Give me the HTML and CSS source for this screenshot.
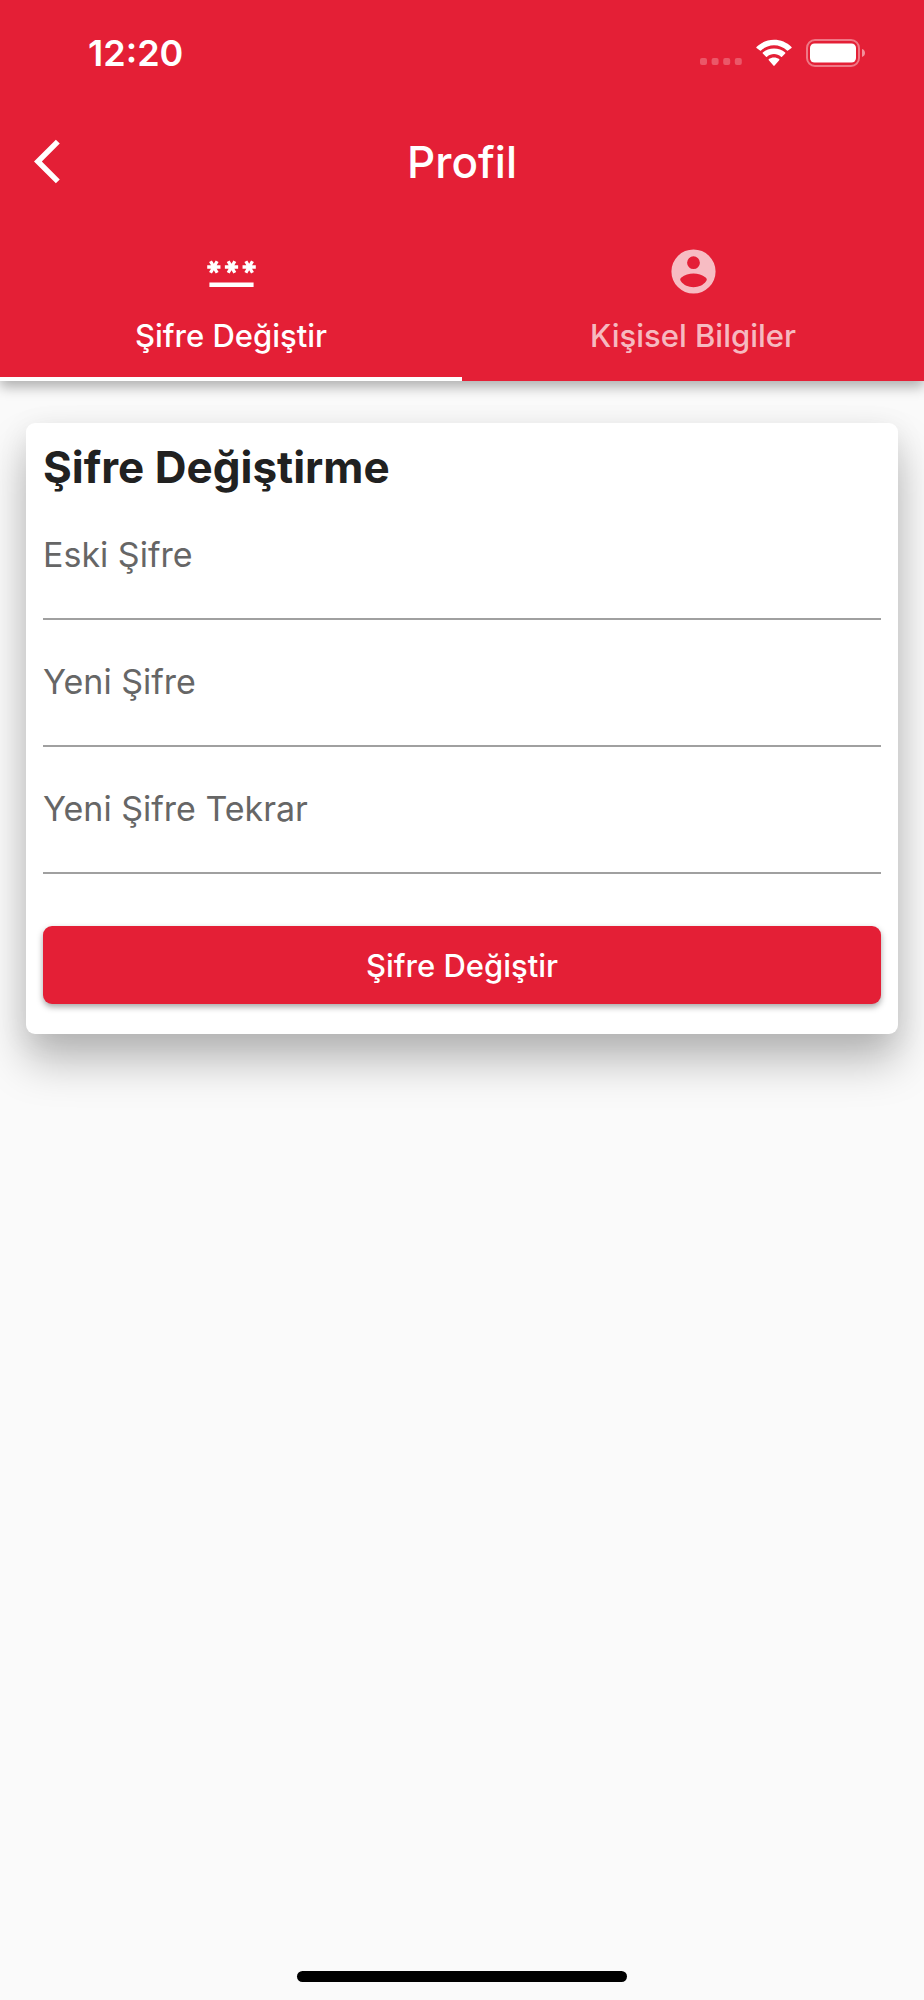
FILE: index.html
```html
<!DOCTYPE html>
<html lang="tr">
<head>
    <meta charset="UTF-8">
    <meta name="viewport" content="width=device-width, initial-scale=1.0">
    <title>Profil</title>
    <link rel="stylesheet" href="styles.css">
</head>
<body>
    <header class="header">
        <div class="status-bar">
            <span class="time">12:20</span>
            <div class="status-icons">
                <svg class="signal" width="42" height="28" viewBox="0 0 42 28" fill="#fff" fill-opacity="0.25">
                    <rect x="0" y="19" width="7" height="7" rx="2"/>
                    <rect x="11.6" y="19" width="7" height="7" rx="2"/>
                    <rect x="23.2" y="19" width="7" height="7" rx="2"/>
                    <rect x="34.8" y="19" width="7" height="7" rx="2"/>
                </svg>
                <svg class="wifi" width="36" height="28" viewBox="0 0 36 28" fill="#fff">
                    <path d="M18 6.3c4.900 0 9.500 1.900 13 5.300.3.3.7.3 1 0l3.500-2.600c.3-.3.3-.8 0-1.100C30.800 3.400 24.600.8 18 .8S5.200 3.400.5 7.900c-.3.3-.3.8 0 1.100L4 11.600c.3.3.7.3 1 0C8.500 8.200 13.100 6.300 18 6.300z"/>
                    <path d="M18 15c2.600 0 5.100 1 7 2.700.3.3.7.3 1 0l3.200-3.200c.3-.3.3-.7 0-1C26.200 10.800 22.200 9.400 18 9.400s-8.200 1.400-11.200 4.100c-.3.3-.3.7 0 1L10 17.700c.3.3.7.3 1 0C12.900 16 15.400 15 18 15z"/>
                    <path d="M23.200 21.200c.3-.3.3-.8 0-1.100C21.700 19 19.900 18.400 18 18.400s-3.700.6-5.200 1.700c-.3.300-.3.800 0 1.100l4.600 5.400c.3.400.9.400 1.200 0z"/>
                </svg>
                <svg class="battery" width="60" height="28" viewBox="0 0 60 28">
                    <rect x="1" y="1" width="52" height="26" rx="8" fill="none" stroke="#fff" stroke-opacity="0.4" stroke-width="2"/>
                    <rect x="4" y="4.500" width="46" height="19" rx="4.500" fill="#fff"/>
                    <path d="M56 10c2 .6 3 2.200 3 4s-1 3.400-3 4z" fill="#fff" fill-opacity="0.5"/>
                </svg>
            </div>
        </div>
        <div class="app-bar">
            <button type="button" class="back-button" aria-label="Geri">
                <svg width="53" height="53" viewBox="0 0 24 24" fill="#fff">
                    <path d="M11.670 3.870L9.900 2.100 0 12l9.900 9.900 1.770-1.770L3.540 12z"/>
                </svg>
            </button>
            <h1>Profil</h1>
        </div>
        <nav class="tabs">
            <a href="#sifre" class="tab active">
                <svg width="53" height="53" viewBox="0 0 24 24" fill="currentColor">
                    <path d="M2 17h20v2H2v-2zm1.150-4.050L4 11.470l.850 1.480 1.300-.750-.850-1.480H7v-1.500H5.300l.850-1.470L4.850 7 4 8.470 3.150 7l-1.300.750.850 1.470H1v1.500h1.700l-.850 1.480 1.300.750zm6.700-.750l1.300.750.850-1.480.850 1.480 1.300-.750-.850-1.480H15v-1.500h-1.700l.850-1.470-1.300-.750L12 8.470 11.150 7l-1.300.750.850 1.470H9v1.500h1.700l-.850 1.480zM23 9.220h-1.700l.850-1.470-1.300-.750L20 8.470 19.150 7l-1.300.750.850 1.470H17v1.500h1.700l-.850 1.480 1.300.750.850-1.480.850 1.480 1.300-.750-.850-1.480H23v-1.500z"/>
                </svg>
                <span>Şifre Değiştir</span>
            </a>
            <a href="#bilgiler" class="tab">
                <svg width="53" height="53" viewBox="0 0 24 24" fill="currentColor" fill-rule="evenodd">
                    <path d="M12 2a10 10 0 1 0 0 20 10 10 0 1 0 0-20zM12 5.100a2.900 2.900 0 1 1 0 5.800 2.900 2.900 0 1 1 0-5.800zM6.300 16.400c-.5-.7-.4-1.200.2-1.700C8 13.400 10 12.900 12 12.900s4 .5 5.500 1.800c.6.500.7 1 .2 1.700C16.400 18.200 14.300 19.100 12 19.100s-4.400-.9-5.700-2.700z"/>
                </svg>
                <span>Kişisel Bilgiler</span>
            </a>
        </nav>
    </header>
    <main class="content">
        <form class="card" id="sifre">
            <h2>Şifre Değiştirme</h2>
            <div class="form-group">
                <label for="oldPassword">Eski Şifre</label>
                <input type="password" id="oldPassword" name="oldPassword">
            </div>
            <div class="form-group">
                <label for="newPassword">Yeni Şifre</label>
                <input type="password" id="newPassword" name="newPassword">
            </div>
            <div class="form-group">
                <label for="newPasswordRepeat">Yeni Şifre Tekrar</label>
                <input type="password" id="newPasswordRepeat" name="newPasswordRepeat">
            </div>
            <button type="submit" class="submit-button">Şifre Değiştir</button>
        </form>
    </main>
    <div class="home-indicator"></div>
</body>
</html>
```
FILE: styles.css
```css
* {
    box-sizing: border-box;
}
body {
    font-family: Inter, "Liberation Sans", sans-serif;
    background-color: #fafafa;
    color: #212121;
    display: flex;
    flex-direction: column;
    min-height: 100vh;
    margin: 0;
}
h1, h2 {
    margin: 0;
}
svg {
    display: block;
}
.header {
    background-color: #e41f36;
    color: #fff;
    box-shadow: 0 6px 12px rgba(0, 0, 0, 0.3);
}
.status-bar {
    display: flex;
    justify-content: space-between;
    align-items: center;
    height: 99px;
    padding: 7px 58px 0 88px;
}
.time {
    font-size: 36px;
    font-weight: 600;
}
.status-icons {
    display: flex;
    align-items: center;
    gap: 14px;
}
.app-bar {
    display: grid;
    grid-template-columns: 1fr auto 1fr;
    align-items: center;
    height: 125px;
    padding: 0 34px;
}
.app-bar h1 {
    font-size: 44px;
    font-weight: 500;
}
.back-button {
    justify-self: start;
    padding: 0;
    border: none;
    background: none;
    cursor: pointer;
}
.tabs {
    display: grid;
    grid-template-columns: 1fr 1fr;
}
.tab {
    display: flex;
    flex-direction: column;
    align-items: center;
    gap: 20px;
    padding: 21px 0 23px;
    border-bottom: 4px solid transparent;
    color: rgba(255, 255, 255, 0.7);
    font-size: 31px;
    font-weight: 500;
    line-height: 36px;
    text-decoration: none;
}
.tab.active {
    border-bottom-color: #fff;
    color: #fff;
}
.content {
    flex: 1;
    padding: 42px 26px;
}
.card {
    background-color: #fff;
    padding: 18px 17px 30px;
    border-radius: 9px;
    box-shadow: 0 28px 44px rgba(0, 0, 0, 0.25), 0 6px 30px rgba(0, 0, 0, 0.08);
}
.card h2 {
    font-size: 44px;
    font-weight: 700;
    line-height: 52px;
}
.form-group {
    display: flex;
    flex-direction: column;
    height: 127px;
    padding-top: 40px;
}
.form-group label {
    color: #666;
    font-size: 34px;
    line-height: 44px;
}
.form-group input {
    flex: 1;
    width: 100%;
    min-height: 0;
    padding: 0;
    border: none;
    border-bottom: 2px solid #a0a0a0;
    background: none;
    font-size: 34px;
    outline: none;
}
.submit-button {
    display: block;
    width: 100%;
    height: 78px;
    margin-top: 52px;
    border: none;
    border-radius: 9px;
    background-color: #e41f36;
    box-shadow: 0 3px 6px rgba(0, 0, 0, 0.35);
    color: #fff;
    font-family: inherit;
    font-size: 31px;
    font-weight: 500;
    cursor: pointer;
}
.home-indicator {
    align-self: center;
    width: 330px;
    height: 11px;
    margin-bottom: 18px;
    border-radius: 6px;
    background-color: #000;
}
```
